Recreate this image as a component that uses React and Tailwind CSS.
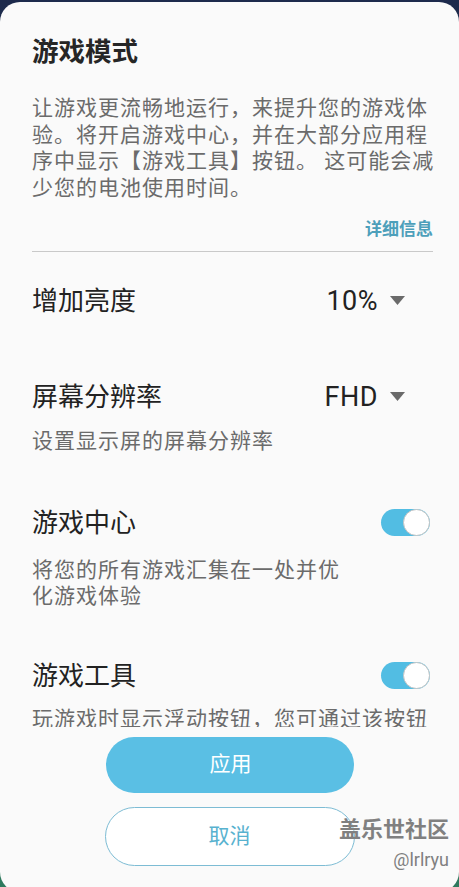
import React from "react";

const cjk = { fontFamily: '"Roboto", "Noto Sans CJK SC", sans-serif' };

function Toggle() {
  return (
    <div className="relative w-[49px] h-[27px] rounded-full bg-[#52bde3] shrink-0">
      <div className="absolute right-0 top-0 w-[27px] h-[27px] rounded-full bg-white border border-[#c4c4c4]" />
    </div>
  );
}

function Caret() {
  return (
    <svg width="15" height="9" viewBox="0 0 15 9" className="ml-[12px]">
      <path d="M0 0 L15 0 L7.5 9 Z" fill="#6a6a6a" />
    </svg>
  );
}

export default function App() {
  return (
    <div
      className="w-[459px] h-[887px] overflow-hidden bg-gradient-to-b from-[#1d2a4c] to-[#2f7a5e]"
      style={cjk}
    >
      <div className="mt-[2px] h-[890px] rounded-[20px] bg-[#fafafa] flex flex-col relative">
        {/* SCROLLING CONTENT */}
        <div className="h-[725px] overflow-hidden pl-[32px] pr-[26px]">
          <div className="pt-[34px] text-[26.5px] leading-[32px] font-bold text-[#262626]">游戏模式</div>

          <p className="mt-[27px] w-[406px] text-[21px] leading-[26.7px] tracking-[1px] text-[#6b6b6b]">
            让游戏更流畅地运行，来提升您的游戏体验。将开启游戏中心，并在大部分应用程序中显示【游戏工具】按钮。 这可能会减少您的电池使用时间。
          </p>

          <div className="mt-[15px] text-right text-[17px] leading-[24px] font-bold text-[#4d9fba]">详细信息</div>

          <div className="mt-[10px] h-px bg-[#c9c9c9]" />

          <div className="mt-[32px] flex items-center justify-between h-[34px]">
            <span className="text-[26px] leading-[34px] text-[#222]">增加亮度</span>
            <span className="flex items-center pr-[28px]">
              <span className="text-[27px] leading-[34px] text-[#222] tracking-[0.5px]">10%</span>
              <Caret />
            </span>
          </div>

          <div className="mt-[62px] flex items-center justify-between h-[34px]">
            <span className="text-[26px] leading-[34px] text-[#222]">屏幕分辨率</span>
            <span className="flex items-center pr-[28px]">
              <span className="text-[27px] leading-[34px] text-[#222] tracking-[0.5px]">FHD</span>
              <Caret />
            </span>
          </div>
          <p className="mt-[14px] text-[21px] leading-[26.7px] tracking-[1px] text-[#6b6b6b]">设置显示屏的屏幕分辨率</p>

          <div className="mt-[51px] flex items-center justify-between h-[34px] pr-[3px]">
            <span className="text-[26px] leading-[34px] text-[#222]">游戏中心</span>
            <Toggle />
          </div>
          <p className="mt-[17px] text-[21px] leading-[26.7px] tracking-[1px] text-[#6b6b6b] w-[320px]">
            将您的所有游戏汇集在一处并优化游戏体验
          </p>

          <div className="mt-[49px] flex items-center justify-between h-[34px] pr-[3px]">
            <span className="text-[26px] leading-[34px] text-[#222]">游戏工具</span>
            <Toggle />
          </div>
          <p className="mt-[13px] text-[21px] leading-[26.7px] tracking-[1px] text-[#6b6b6b]">
            玩游戏时显示浮动按钮，您可通过该按钮访问游戏工具和设置。
          </p>
        </div>

        {/* BUTTONS */}
        <div className="flex flex-col items-center pt-[10px]">
          <button className="w-[248px] h-[56px] rounded-full bg-[#5abfe4] text-white text-[21px] pl-[2px]">应用</button>
          <button className="mt-[14px] w-[250px] h-[59px] rounded-full bg-white border-[1.5px] border-[#7dbcd4] text-[#58b2cf] text-[21px]">
            取消
          </button>
        </div>

        {/* WATERMARK */}
        <div className="absolute right-[10px] top-[815px] flex flex-col items-end text-[#808080]">
          <span className="text-[22px] leading-[26px] font-bold">盖乐世社区</span>
          <span className="text-[18px] leading-[22px] mt-[6px]">@lrlryu</span>
        </div>
      </div>
    </div>
  );
}
